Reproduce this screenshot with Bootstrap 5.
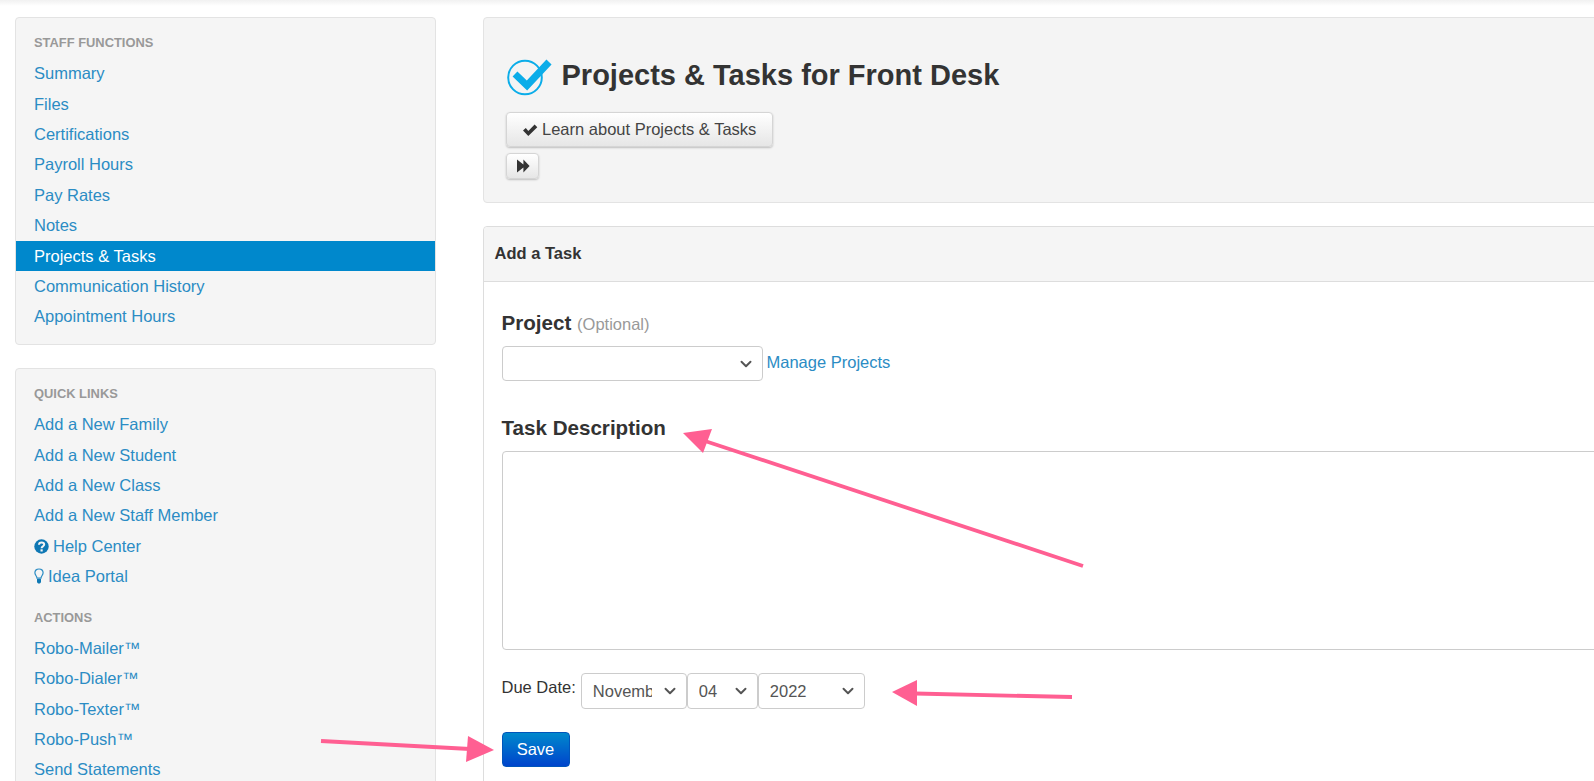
<!DOCTYPE html>
<html lang="en">
<head>
<meta charset="utf-8">
<title>Projects &amp; Tasks</title>
<link rel="stylesheet" href="https://cdn.jsdelivr.net/npm/bootstrap@5.3.0/dist/css/bootstrap.min.css">
<style>
html,body{height:781px;overflow:hidden;background:#fff}
body{font-family:"Liberation Sans",Arial,sans-serif;font-size:16.5px;color:#333;position:relative}
.topfade{height:6px;background:linear-gradient(#f1f1f1,#fff);margin-bottom:11px}
.page-wrap{width:1900px;padding-left:15px;gap:47px}
.side-col{width:420.5px;flex:none}
.main-col{width:1300px;flex:none}
.side-well{background:#f5f5f5;border:1px solid #e3e3e3;border-radius:4px;padding:10px 0 12px;margin-bottom:23px}
.side-head{font-size:12.9px;font-weight:700;color:#999;height:30.4px;line-height:30.4px;padding-left:18px;text-transform:uppercase}
.side-head.spaced{margin-top:11px}
.side-link{display:flex;align-items:center;height:30.4px;padding:0 18px;color:#2b8cc4;font-size:16.5px;text-decoration:none}
.side-link.current{background:#0088cc;color:#fff}
.side-link svg{flex:none;margin-right:4px}
.hero-well{background:#f4f4f4;border:1px solid #e3e3e3;border-radius:4px;height:186px;padding:35px 22.5px 0;margin-bottom:23px}
.hero-title{font-size:29px;font-weight:700;line-height:36px;margin:0 0 15px;color:#333;display:flex;align-items:center;gap:8.5px;height:44px}
.hero-title svg{position:relative;top:1px}
.grad-btn{display:flex;align-items:center;background:linear-gradient(#fff,#e6e6e6);border:1px solid #d5d5d5;border-radius:4px;box-shadow:0 1px 2px rgba(0,0,0,.22);color:#444;font-size:16.5px;padding:0}
.btn-learn{width:267px;height:35px;padding-left:15px;gap:4px;white-space:nowrap}
.btn-skip{width:33px;height:26px;justify-content:center;margin-top:6px}
.task-panel{border:1px solid #ddd;border-radius:4px 4px 0 0;--bs-card-bg:#fff}
.task-panel .card-header{background:#f5f5f5;border-bottom:1px solid #ddd;height:55px;padding:0 11px 2px;display:flex;align-items:center;font-weight:700;font-size:16.5px;color:#333;border-radius:4px 4px 0 0}
.task-panel .card-body{padding:28px 18px 40px}
.field-title{font-size:20.6px;font-weight:700;line-height:26px;color:#333;margin:0 0 9px}
.field-title small{font-size:16.5px;font-weight:400;color:#999}
.thin-select{border:1px solid #ccc;border-radius:4px;height:36px;font-size:16.5px;color:#555;padding:0 30px 0 11px;background-position:right 8px center;box-shadow:none;background-image:url("data:image/svg+xml,%3csvg xmlns='http://www.w3.org/2000/svg' viewBox='0 0 16 16'%3e%3cpath fill='none' stroke='%23555' stroke-linecap='round' stroke-linejoin='round' stroke-width='2.6' d='m2 5 6 6 6-6'/%3e%3c/svg%3e")}
.select-project{width:261px;height:35px}
.manage-link{color:#2b8cc4;text-decoration:none;font-size:16.5px;margin-left:4px;position:relative;top:-1px}
.second-title{margin:34px 0 10px}
.desc-box{height:199px;border:1px solid #ccc;border-radius:4px;resize:none;box-shadow:none;margin-bottom:23px}
.due-label{font-size:16.5px;color:#333;margin-right:5px;position:relative;top:2px;white-space:nowrap}
.sel-m{width:106px;padding-right:33.5px}.sel-d{width:71px}.sel-y{width:107px}
.date-row{gap:0;margin-bottom:23px}
.save-btn{width:68px;height:35px;background:linear-gradient(#0088cc,#0044cc);border:1px solid #0055bb;color:#fff;border-radius:4px;font-size:16.5px;padding:0}
.arrow-layer{position:absolute;left:0;top:0;width:1594px;height:781px;pointer-events:none}
</style>
</head>
<body>
<div class="topfade"></div>
<div class="d-flex page-wrap">
  <aside class="side-col">
    <div class="side-well">
      <div class="side-head">Staff Functions</div>
      <a class="side-link" href="#">Summary</a>
      <a class="side-link" href="#">Files</a>
      <a class="side-link" href="#">Certifications</a>
      <a class="side-link" href="#">Payroll Hours</a>
      <a class="side-link" href="#">Pay Rates</a>
      <a class="side-link" href="#">Notes</a>
      <a class="side-link current" href="#">Projects &amp; Tasks</a>
      <a class="side-link" href="#">Communication History</a>
      <a class="side-link" href="#">Appointment Hours</a>
    </div>
    <div class="side-well">
      <div class="side-head">Quick Links</div>
      <a class="side-link" href="#">Add a New Family</a>
      <a class="side-link" href="#">Add a New Student</a>
      <a class="side-link" href="#">Add a New Class</a>
      <a class="side-link" href="#">Add a New Staff Member</a>
      <a class="side-link" href="#">
        <svg width="15" height="15" viewBox="0 0 15 15"><circle cx="7.5" cy="7.5" r="7.2" fill="#0f78b4"/><path d="M5 5.8C5 4.2 6.2 3.4 7.6 3.4S10.2 4.3 10.2 5.6C10.2 7.4 7.6 7.4 7.6 9.2" fill="none" stroke="#f5f5f5" stroke-width="2"/><rect x="6.5" y="10.3" width="2.2" height="2.2" fill="#f5f5f5"/></svg>
        Help Center</a>
      <a class="side-link" href="#">
        <svg width="10" height="16" viewBox="0 0 10 16"><path d="M5 1C2.6 1 .9 2.6.9 4.8.9 7 2.8 7.8 3 10.2H7C7.2 7.8 9.1 7 9.1 4.8 9.1 2.6 7.4 1 5 1Z" fill="none" stroke="#2b8cc4" stroke-width="1.2"/><path d="M3 11H7V13.8C7 15 6 15.6 5 15.6S3 15 3 13.8Z" fill="#0f78b4"/></svg>
        Idea Portal</a>
      <div class="side-head spaced">Actions</div>
      <a class="side-link" href="#">Robo-Mailer™</a>
      <a class="side-link" href="#">Robo-Dialer™</a>
      <a class="side-link" href="#">Robo-Texter™</a>
      <a class="side-link" href="#">Robo-Push™</a>
      <a class="side-link" href="#">Send Statements</a>
    </div>
  </aside>
  <main class="main-col">
    <div class="hero-well">
      <h1 class="hero-title">
        <svg width="47" height="40" viewBox="0 0 47 40" class="flex-none"><circle cx="19" cy="21.5" r="16.8" fill="none" stroke="#0bade9" stroke-width="2"/><path d="M9 18L21 29.5L43 6" fill="none" stroke="#0bade9" stroke-width="7"/></svg>
        Projects &amp; Tasks for Front Desk
      </h1>
      <button type="button" class="btn grad-btn btn-learn">
        <svg width="16" height="14" viewBox="0 0 16 14"><path d="M1 7.6L3.8 5L6.3 8L12.6 1.5L15.3 4.2L6.3 13Z" fill="#333"/></svg>
        Learn about Projects &amp; Tasks</button>
      <button type="button" class="btn grad-btn btn-skip" aria-label="Next">
        <svg width="14" height="14" viewBox="0 0 14 14"><path d="M1 .5L7.4 5.6V.5L13.6 7L7.4 13.5V8.4L1 13.5Z" fill="#333"/></svg>
      </button>
    </div>
    <div class="card task-panel">
      <div class="card-header">Add a Task</div>
      <div class="card-body">
        <h2 class="field-title">Project <small>(Optional)</small></h2>
        <div class="d-flex align-items-center">
          <select class="form-select thin-select select-project"><option></option></select>
          <a class="manage-link" href="#">Manage Projects</a>
        </div>
        <h2 class="field-title second-title">Task Description</h2>
        <textarea class="form-control desc-box"></textarea>
        <div class="d-flex align-items-start date-row">
          <span class="due-label">Due Date:</span>
          <select class="form-select thin-select sel-m"><option>November</option></select>
          <select class="form-select thin-select sel-d"><option>04</option></select>
          <select class="form-select thin-select sel-y"><option>2022</option></select>
        </div>
        <button type="button" class="btn save-btn">Save</button>
      </div>
    </div>
  </main>
</div>
<svg class="arrow-layer" viewBox="0 0 1594 781" aria-hidden="true">
  <g fill="#ff5f92" stroke="#ff5f92">
    <line x1="1083" y1="566" x2="705" y2="441" stroke-width="3.8"/>
    <polygon points="683,433 712,429 703,453" stroke="none"/>
    <line x1="1072" y1="697" x2="915" y2="693.5" stroke-width="3.8"/>
    <polygon points="892,692 917,680 917,706" stroke="none"/>
    <line x1="321" y1="741" x2="470" y2="749" stroke-width="3.8"/>
    <polygon points="494,750 468,736 466,762" stroke="none"/>
  </g>
</svg>
<script src="https://cdn.jsdelivr.net/npm/bootstrap@5.3.0/dist/js/bootstrap.bundle.min.js"></script>
</body>
</html>
